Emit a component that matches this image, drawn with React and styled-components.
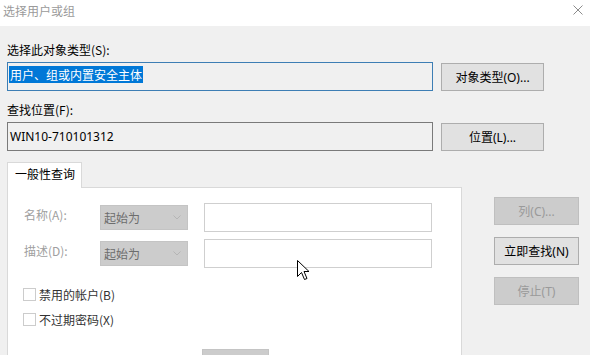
import React from "react";
import styled, { createGlobalStyle } from "styled-components";

const Global = createGlobalStyle`
  html, body { margin: 0; padding: 0; background: #f0f0f0; overflow: hidden; }
  body { font-family: "Noto Sans", "Noto Sans CJK SC", sans-serif; font-size: 12px; color: #000; }
  * { box-sizing: border-box; }
`;

const Window = styled.div`
  position: relative;
  width: 590px;
  height: 355px;
  overflow: hidden;
  background: #f0f0f0;
`;

const TitleBar = styled.div`
  height: 26px;
  background: #fff;
  display: flex;
  align-items: center;
  justify-content: space-between;
  padding: 0 7px 0 3px;
`;

const Title = styled.span`
  font-family: "Noto Sans CJK SC", sans-serif;
  font-size: 12px;
  color: #9a9a9a;
  line-height: 16px;
  margin-top: -4px;
`;

const CloseIcon = styled.svg`
  width: 10px;
  height: 10px;
  margin-top: -6px;
`;

const Body = styled.div`
  padding: 16px 0 0 7px;
`;

const Field = styled.div`
  display: flex;
  flex-direction: column;
  gap: 4px;
  & + & { margin-top: 11px; }
`;

const Label = styled.div`
  line-height: 16px;
  height: 16px;
  font-family: "Noto Sans CJK SC", sans-serif;
`;

const FieldRow = styled.div`
  display: flex;
  align-items: center;
  gap: 8px;
`;

const ReadBox = styled.div`
  width: 426px;
  height: 29px;
  border: 1px solid ${(p) => (p.$focused ? "#3d7eb4" : "#7a7a7a")};
  background: #f0f0f0;
  padding: 0 0 0 ${(p) => (p.$focused ? 1 : 2)}px;
  display: flex;
  align-items: ${(p) => (p.$focused ? "flex-start" : "center")};
  padding-top: ${(p) => (p.$focused ? 3 : 0)}px;
  font-family: "Noto Sans", "Noto Sans CJK SC", sans-serif;
`;

const Selected = styled.span`
  background: #0078d7;
  color: #fff;
  line-height: 17px;
  padding: 0 1px;
  font-family: "Noto Sans CJK SC", sans-serif;
`;

const Button = styled.button`
  width: ${(p) => p.$w || 103}px;
  height: 28px;
  border: 1px solid ${(p) => (p.disabled ? "#bfbfbf" : "#adadad")};
  background: ${(p) => (p.disabled ? "#cccccc" : "#e1e1e1")};
  color: ${(p) => (p.disabled ? "#9a9a9a" : "#000")};
  font-family: "Noto Sans", "Noto Sans CJK SC", sans-serif;
  font-size: 12px;
  padding: 0;
  display: flex;
  align-items: center;
  justify-content: center;
`;

const Main = styled.div`
  display: flex;
  margin-top: 11px;
  align-items: flex-start;
`;

const TabArea = styled.div`
  width: 455px;
  display: flex;
  flex-direction: column;
`;

const Tab = styled.div`
  width: 75px;
  height: 26px;
  background: #fff;
  border: 1px solid #d9d9d9;
  border-bottom: none;
  padding: 3px 0 0 7px;
  font-family: "Noto Sans CJK SC", sans-serif;
  font-size: 12px;
  line-height: 16px;
  margin-bottom: -1px;
  position: relative;
  z-index: 1;
`;

const Panel = styled.div`
  background: #fff;
  border: 1px solid #d9d9d9;
  border-bottom: none;
  height: 200px;
  padding: 15px 0 0 16px;
`;

const QueryRows = styled.div`
  display: flex;
  flex-direction: column;
  gap: 7px;
`;

const QueryRow = styled.div`
  display: grid;
  grid-template-columns: 76px 104px 228px;
  align-items: center;
  height: 29px;
`;

const DimLabel = styled.span`
  color: #a0a0a0;
  font-family: "Noto Sans CJK SC", sans-serif;
  margin-top: -6px;
`;

const Select = styled.div`
  height: 25px;
  width: 88px;
  background: #cccccc;
  border: 1px solid #c4c4c4;
  color: #6d6d6d;
  display: flex;
  align-items: center;
  justify-content: space-between;
  padding: 0 6px 0 3px;
  font-family: "Noto Sans CJK SC", sans-serif;
  & svg { width: 8px; height: 5px; }
`;

const TextInput = styled.div`
  height: 29px;
  border: 1px solid #cfcfcf;
  background: #fff;
`;

const Checks = styled.div`
  display: flex;
  flex-direction: column;
  gap: 7px;
  margin-top: 17px;
`;

const CheckRow = styled.div`
  display: flex;
  align-items: center;
  height: 18px;
  gap: 3px;
  font-family: "Noto Sans CJK SC", sans-serif;
  color: #333;
`;

const Box = styled.span`
  width: 13px;
  height: 13px;
  border: 1px solid #cccccc;
  background: #fff;
  margin-left: -1px;
`;

const DaysRow = styled.div`
  display: flex;
  align-items: center;
  margin-top: 21px;
  gap: 16px;
  height: 24px;
`;

const DaysLabel = styled.span`
  width: 162px;
  color: #8a8a8a;
  font-family: "Noto Sans CJK SC", sans-serif;
  margin-top: 8px;
`;

const DaysSelect = styled.div`
  width: 67px;
  height: 24px;
  background: #cccccc;
  border: 1px solid #c4c4c4;
`;

const SideButtons = styled.div`
  display: flex;
  flex-direction: column;
  gap: 12px;
  margin-left: 32px;
  padding-top: 35px;
`;

const Cursor = styled.svg`
  position: absolute;
  left: 297px;
  top: 260px;
  width: 13px;
  height: 21px;
`;

const Chevron = () => (
  <svg viewBox="0 0 8 5">
    <path d="M0.5 0.5 L4 4 L7.5 0.5" fill="none" stroke="#b5b5b5" strokeWidth="1" />
  </svg>
);

export default function App() {
  return (
    <Window>
      <Global />
      <TitleBar>
        <Title>选择用户或组</Title>
        <CloseIcon viewBox="0 0 10 10">
          <path d="M0.5 0.5 L9.5 9.5 M9.5 0.5 L0.5 9.5" stroke="#8c8c8c" strokeWidth="1" />
        </CloseIcon>
      </TitleBar>
      <Body>
        <Field>
          <Label>选择此对象类型(S):</Label>
          <FieldRow>
            <ReadBox $focused>
              <Selected>用户、组或内置安全主体</Selected>
            </ReadBox>
            <Button>对象类型(O)...</Button>
          </FieldRow>
        </Field>
        <Field>
          <Label>查找位置(F):</Label>
          <FieldRow>
            <ReadBox>WIN10-710101312</ReadBox>
            <Button>位置(L)...</Button>
          </FieldRow>
        </Field>
        <Main>
          <TabArea>
            <Tab>一般性查询</Tab>
            <Panel>
              <QueryRows>
                <QueryRow>
                  <DimLabel>名称(A):</DimLabel>
                  <Select>
                    起始为
                    <Chevron />
                  </Select>
                  <TextInput />
                </QueryRow>
                <QueryRow>
                  <DimLabel>描述(D):</DimLabel>
                  <Select>
                    起始为
                    <Chevron />
                  </Select>
                  <TextInput />
                </QueryRow>
              </QueryRows>
              <Checks>
                <CheckRow>
                  <Box />
                  禁用的帐户(B)
                </CheckRow>
                <CheckRow>
                  <Box />
                  不过期密码(X)
                </CheckRow>
              </Checks>
              <DaysRow>
                <DaysLabel>自上次登录后的天数(I):</DaysLabel>
                <DaysSelect />
              </DaysRow>
            </Panel>
          </TabArea>
          <SideButtons>
            <Button $w={85} disabled>列(C)...</Button>
            <Button $w={85}>立即查找(N)</Button>
            <Button $w={85} disabled>停止(T)</Button>
          </SideButtons>
        </Main>
      </Body>
      <Cursor viewBox="0 0 13 21">
        <path
          d="M0.5 0.5 L0.5 16.5 L4.5 12.5 L7.5 19.5 L10 18.5 L7 11.5 L12 11.5 Z"
          fill="#fff"
          stroke="#000"
          strokeWidth="1"
          strokeLinejoin="round"
        />
      </Cursor>
    </Window>
  );
}
